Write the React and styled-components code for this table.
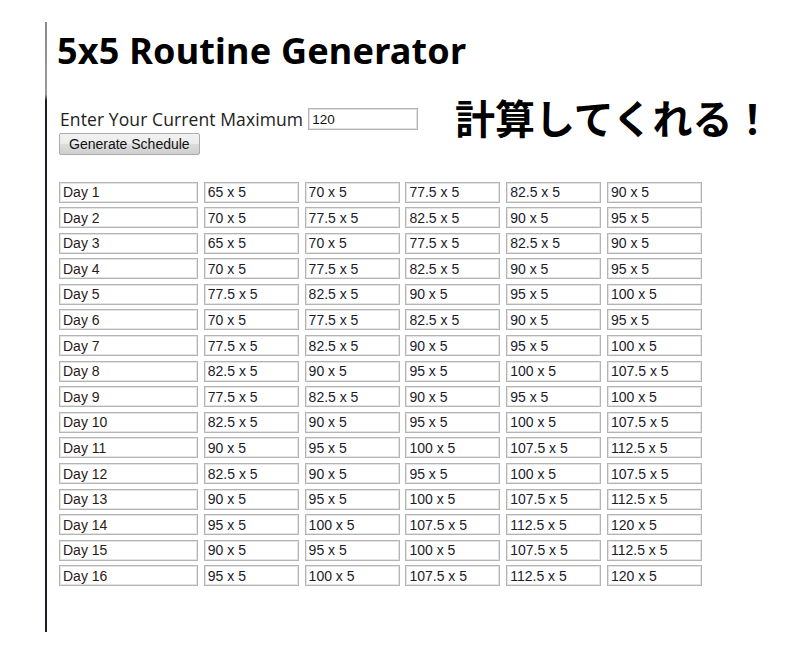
import React, { useState } from 'react';
import styled, { createGlobalStyle } from 'styled-components';

const GlobalStyle = createGlobalStyle`
  html, body {
    margin: 0;
    padding: 0;
    background: #ffffff;
  }
  body {
    font-family: "Liberation Sans", Arial, sans-serif;
    color: #111;
  }
`;

const Page = styled.div`
  margin: 22px 0 0 45px;
  height: 610px;
  padding: 7px 0 0 12px;
  border-left: 2px solid transparent;
  border-image: linear-gradient(180deg, #8a8a8a 0%, #9a9a9a 12%, #1c1f2a 13%, #1c1f2a 100%) 1;
  box-sizing: border-box;
`;

const Title = styled.h1`
  margin: 0 0 0 -2px;
  font-family: "Noto Sans", "DejaVu Sans", sans-serif;
  font-size: 36px;
  line-height: 44px;
  font-weight: 700;
  letter-spacing: 0.2px;
  color: #000;
`;

const TopRow = styled.div`
  display: flex;
  align-items: flex-start;
  margin-top: 34px;
`;

const FormBlock = styled.div`
  display: flex;
  flex-direction: column;
  align-items: flex-start;
  gap: 2px;
  width: 396px;
`;

const FieldRow = styled.div`
  display: flex;
  align-items: center;
  gap: 5px;
  padding-left: 1px;
`;

const Label = styled.label`
  font-family: "Open Sans", "Noto Sans", sans-serif;
  font-size: 17.5px;
  letter-spacing: 0.1px;
  color: #222;
`;

const MaxInput = styled.input`
  width: 110px;
  height: 22px;
  box-sizing: border-box;
  border: 1px solid #b4b4b4;
  box-shadow: inset 0 0 0 1px #e2e2e2;
  padding: 0 3px;
  font-family: "Liberation Sans", Arial, sans-serif;
  font-size: 13.5px;
  color: #111;
  outline: none;
`;

const Button = styled.button`
  height: 22px;
  padding: 0 9px;
  box-sizing: border-box;
  border: 1px solid #acacac;
  border-radius: 2px;
  background: linear-gradient(180deg, #f2f2f2 0%, #ebebeb 50%, #dddddd 51%, #cfcfcf 100%);
  font-family: "Liberation Sans", Arial, sans-serif;
  font-size: 14px;
  color: #111;
  cursor: pointer;
`;

const Callout = styled.div`
  margin: -12px 0 0 0;
  font-family: "Noto Sans CJK JP", "Noto Sans", sans-serif;
  font-size: 40px;
  line-height: 44px;
  font-weight: 700;
  color: #000;
  white-space: nowrap;
`;

const Schedule = styled.div`
  display: grid;
  grid-template-columns: 139px repeat(5, 95px);
  grid-auto-rows: 21px;
  column-gap: 5.8px;
  row-gap: 4.6px;
  margin-top: 26.5px;
`;

const Cell = styled.input`
  width: 100%;
  height: 100%;
  box-sizing: border-box;
  border: 1px solid #b4b4b4;
  box-shadow: inset 0 0 0 1px #e4e4e4;
  padding: 0 3px;
  font-family: "Liberation Sans", Arial, sans-serif;
  font-size: 14px;
  color: ${p => (p.$day ? '#2a1a1a' : '#1a1a2a')};
  background: #fff;
  outline: none;
`;

const schedule = [
  ['65', '70', '77.5', '82.5', '90'],
  ['70', '77.5', '82.5', '90', '95'],
  ['65', '70', '77.5', '82.5', '90'],
  ['70', '77.5', '82.5', '90', '95'],
  ['77.5', '82.5', '90', '95', '100'],
  ['70', '77.5', '82.5', '90', '95'],
  ['77.5', '82.5', '90', '95', '100'],
  ['82.5', '90', '95', '100', '107.5'],
  ['77.5', '82.5', '90', '95', '100'],
  ['82.5', '90', '95', '100', '107.5'],
  ['90', '95', '100', '107.5', '112.5'],
  ['82.5', '90', '95', '100', '107.5'],
  ['90', '95', '100', '107.5', '112.5'],
  ['95', '100', '107.5', '112.5', '120'],
  ['90', '95', '100', '107.5', '112.5'],
  ['95', '100', '107.5', '112.5', '120'],
];

export default function App() {
  const [max, setMax] = useState('120');

  return (
    <>
      <GlobalStyle />
      <Page>
        <Title>5x5 Routine Generator</Title>
        <TopRow>
          <FormBlock>
            <FieldRow>
              <Label htmlFor="max">Enter Your Current Maximum</Label>
              <MaxInput id="max" value={max} onChange={e => setMax(e.target.value)} />
            </FieldRow>
            <Button type="button">Generate Schedule</Button>
          </FormBlock>
          <Callout>計算してくれる！</Callout>
        </TopRow>
        <Schedule>
          {schedule.map((row, i) => (
            <React.Fragment key={i}>
              <Cell $day readOnly value={`Day ${i + 1}`} />
              {row.map((w, j) => (
                <Cell key={j} readOnly value={`${w} x 5`} />
              ))}
            </React.Fragment>
          ))}
        </Schedule>
      </Page>
    </>
  );
}
